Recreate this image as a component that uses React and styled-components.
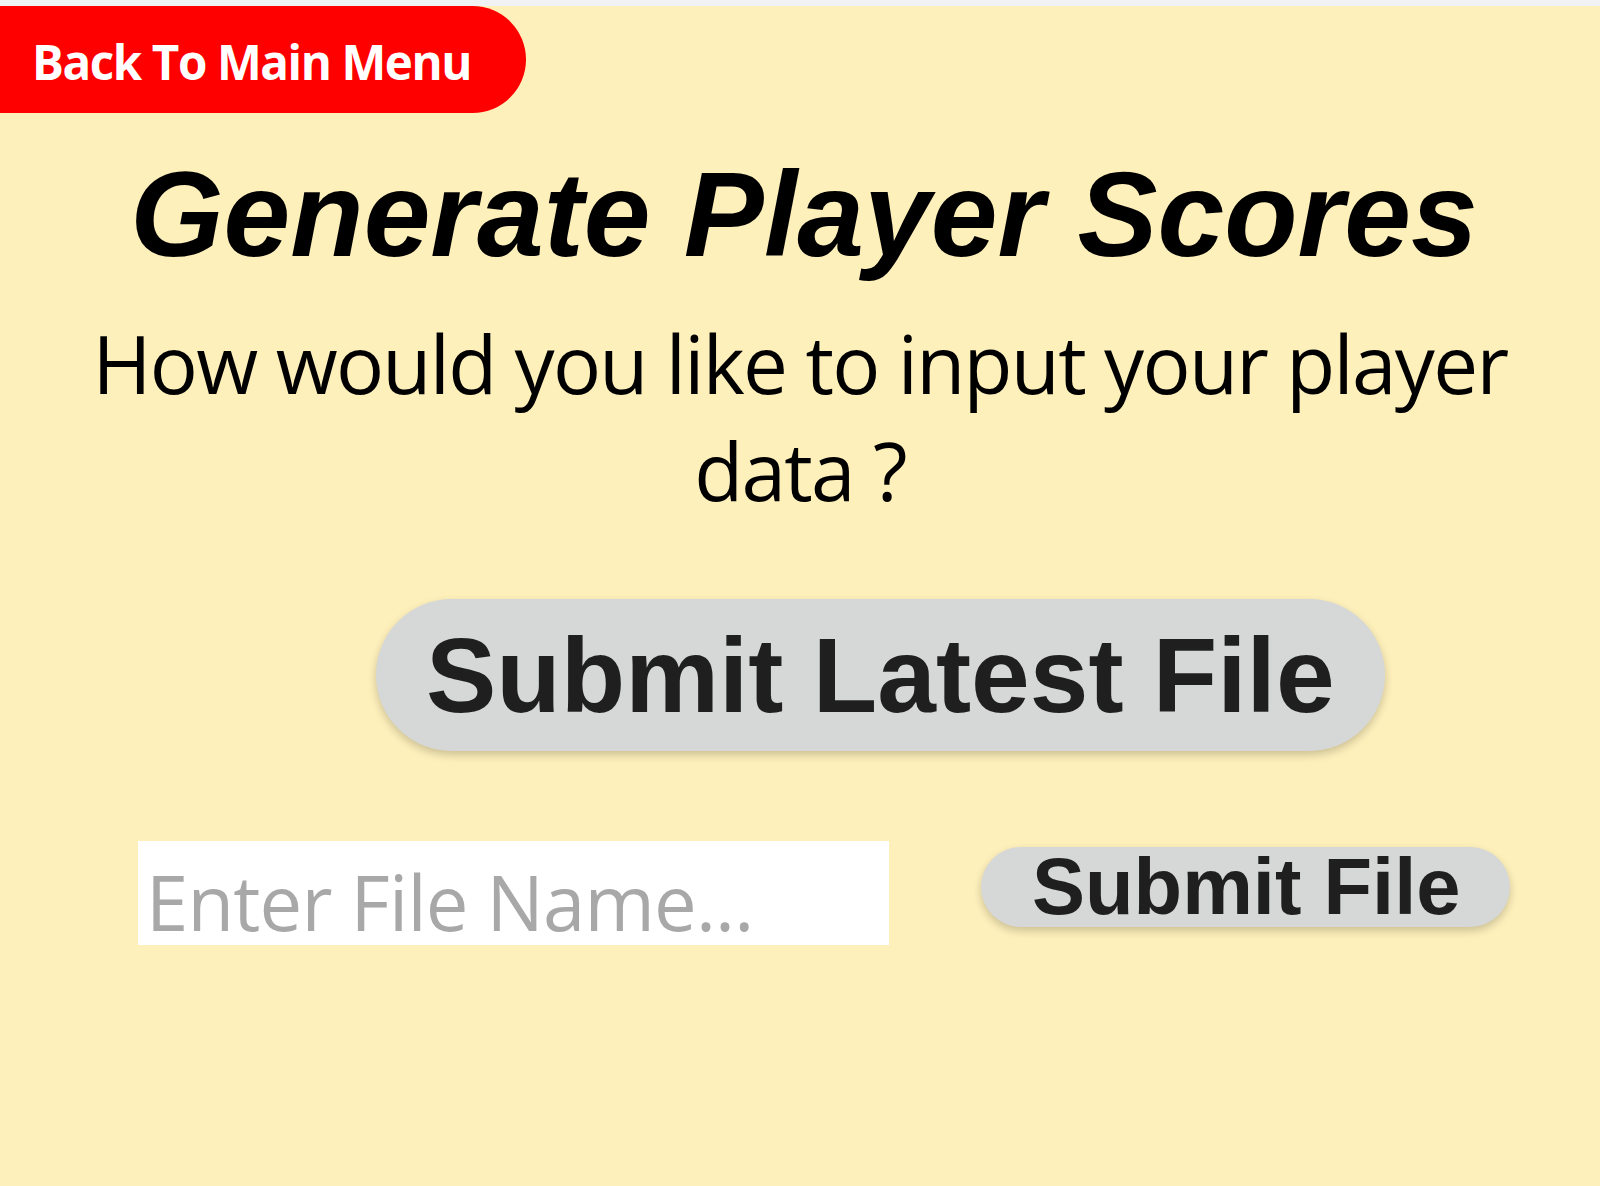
import React from 'react';
import styled, { createGlobalStyle } from 'styled-components';

const GlobalStyle = createGlobalStyle`
  html, body {
    margin: 0;
    padding: 0;
    background: #f1f2f4;
  }
  * {
    box-sizing: border-box;
  }
`;

const App = () => {
  return (
    <>
      <GlobalStyle />
      <Page>
        <BackButton type="button">Back To Main Menu</BackButton>
        <Title>Generate Player Scores</Title>
        <Prompt>How would you like to input your player data ?</Prompt>
        <LatestRow>
          <PillButton type="button" $size="large">Submit Latest File</PillButton>
        </LatestRow>
        <FileRow>
          <FileInput type="text" placeholder="Enter File Name..." />
          <PillButton type="button" $size="small">Submit File</PillButton>
        </FileRow>
      </Page>
    </>
  );
};

export default App;

const Page = styled.div`
  margin-top: 6px;
  min-height: calc(100vh - 6px);
  background: #fef0bb; /* fundo amarelo claro */
  display: flex;
  flex-direction: column;
  align-items: stretch;
`;

const BackButton = styled.button`
  align-self: flex-start;
  display: inline-flex;
  align-items: center;
  height: 107px;
  padding: 4px 55px 0 32px;
  border: none;
  border-radius: 0 54px 54px 0;
  background: #ff0000;
  color: #ffffff;
  font-family: "Open Sans", "Noto Sans", sans-serif;
  font-weight: 700;
  font-size: 47.5px;
  letter-spacing: -1.4px;
  cursor: pointer;
`;

const Title = styled.h1`
  margin: 32px 0 0;
  padding-left: 8px;
  text-align: center;
  font-family: "Liberation Sans", Arial, sans-serif;
  font-style: italic;
  font-weight: 700;
  font-size: 120px;
  line-height: 138px;
  color: #000000;
`;

const Prompt = styled.h2`
  margin: 26px 0 0;
  padding: 0 60px;
  text-align: center;
  font-family: "Open Sans", "Noto Sans", sans-serif;
  font-weight: 400;
  font-size: 80px;
  letter-spacing: -1.7px;
  line-height: 107px;
  color: #000000;
`;

const LatestRow = styled.div`
  display: flex;
  margin-top: 76px;
  padding-left: 376px;
`;

const PillButton = styled.button`
  border: none;
  background: #d6d8d8;
  color: #1f1f1f;
  font-family: "Liberation Sans", Arial, sans-serif;
  font-weight: 700;
  cursor: pointer;
  box-shadow: 0 4px 9px rgba(0, 0, 0, 0.2);
  height: ${({ $size }) => ($size === 'large' ? '152px' : '80px')};
  line-height: ${({ $size }) => ($size === 'large' ? '152px' : '80px')};
  font-size: ${({ $size }) => ($size === 'large' ? '105.5px' : '79.5px')};
  padding: ${({ $size }) => ($size === 'large' ? '0 50px 0 50px' : '0 50px 0 51px')};
  border-radius: ${({ $size }) => ($size === 'large' ? '76px' : '40px')};
  margin-top: ${({ $size }) => ($size === 'large' ? '0' : '6px')};
`;

const FileRow = styled.div`
  display: flex;
  align-items: flex-start;
  gap: 92px;
  margin-top: 90px;
  padding-left: 138px;
`;

const FileInput = styled.input`
  width: 751px;
  height: 104px;
  padding: 17px 0 0 8px;
  border: none;
  outline: none;
  background: #ffffff;
  font-family: "Open Sans", "Noto Sans", sans-serif;
  font-size: 76px;
  letter-spacing: -0.8px;
  color: #222;

  &::placeholder {
    color: #a8a8a8;
  }
`;
